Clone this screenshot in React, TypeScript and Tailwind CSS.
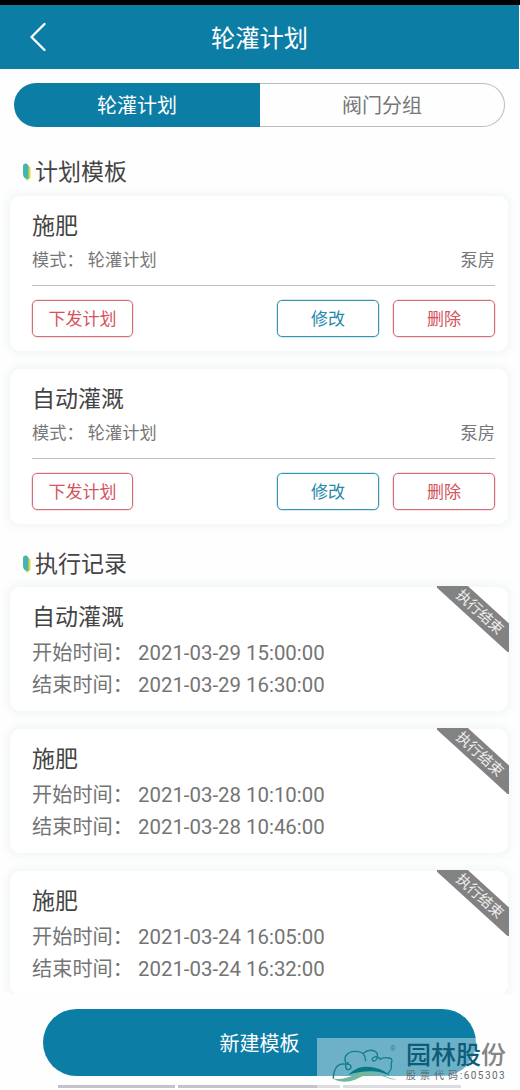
import { ChevronLeft } from "lucide-react"

interface Template {
  name: string
  mode: string
  place: string
}

interface RunRecord {
  name: string
  start: string
  end: string
}

const templates: Template[] = [
  { name: "施肥", mode: "轮灌计划", place: "泵房" },
  { name: "自动灌溉", mode: "轮灌计划", place: "泵房" },
]

const records: RunRecord[] = [
  { name: "自动灌溉", start: "2021-03-29 15:00:00", end: "2021-03-29 16:30:00" },
  { name: "施肥", start: "2021-03-28 10:10:00", end: "2021-03-28 10:46:00" },
  { name: "施肥", start: "2021-03-24 16:05:00", end: "2021-03-24 16:32:00" },
]

function SectionTitle({ children }: { children: string }) {
  return (
    <h2 className="flex h-[34px] items-center pt-[5px] pl-[23px] text-[23px] text-[#444]">
      <svg className="mr-[4px] mb-[4px] h-[18px] w-[8px] shrink-0" viewBox="0 0 8 18">
        <path d="M3 2 7.5 4v10.5L4 18 2.5 15z" fill="#e0d63c" />
        <path d="M0 3Q0 0 3 .5 5.5 1 5.5 4v12Q0 16 0 11z" fill="#46b5b1" />
      </svg>
      {children}
    </h2>
  )
}

function TemplateCard({ template }: { template: Template }) {
  return (
    <div className="h-[155px] rounded-[10px] bg-white pt-[13px] pr-[13px] pl-[22px] shadow-[0_0_10px_3px_rgba(20,120,110,0.06)]">
      <h3 className="h-[34px] text-[23px] leading-[35px] text-[#444]">{template.name}</h3>
      <div className="flex h-[43px] justify-between border-b border-[#bfbfbf] text-[17.2px] leading-[35px] text-[#777]">
        <span>模式： {template.mode}</span>
        <span>{template.place}</span>
      </div>
      <div className="mt-[14px] flex gap-[14px] text-[17px]">
        <button className="mr-auto h-[37px] w-[101px] rounded-[5px] border-[1.5px] border-[#d66c78] pt-[3px] text-[#d4535c] ring-[0.5px] ring-[#d66c78]/40">
          下发计划
        </button>
        <button className="h-[37px] w-[102px] rounded-[5px] border-[1.5px] border-[#3594b0] pt-[3px] text-[#2589ac] ring-[0.5px] ring-[#3594b0]/40">
          修改
        </button>
        <button className="h-[37px] w-[102px] rounded-[5px] border-[1.5px] border-[#d66c78] pt-[3px] text-[#d4535c] ring-[0.5px] ring-[#d66c78]/40">
          删除
        </button>
      </div>
    </div>
  )
}

function RecordCard({ record }: { record: RunRecord }) {
  return (
    <div className="relative h-[124px] shrink-0 rounded-[10px] bg-white px-[22px] pt-[13px] text-[20.4px] leading-8 text-[#747474] shadow-[0_0_10px_3px_rgba(20,120,110,0.06)]">
      <h3 className="h-[37px] text-[23px] leading-[35px] text-[#444]">{record.name}</h3>
      <p>
        <span className="text-[20.2px]">开始时间：</span> {record.start}
      </p>
      <p>
        <span className="text-[20.2px]">结束时间：</span> {record.end}
      </p>
      {/* status ribbon over the corner */}
      <div className="absolute -top-px -right-px h-[66px] w-[72px] overflow-hidden">
        <div className="absolute top-[15px] -left-[20px] flex h-[22px] w-[126px] rotate-[42.4deg] items-center justify-center bg-[#828282] pt-[3px] text-[14.5px] leading-none text-[#eee]">
          执行结束
        </div>
      </div>
    </div>
  )
}

function Watermark() {
  return (
    <div className="absolute top-[44px] left-[317px] h-[52px] w-[203px] bg-white/40">
      <svg className="absolute top-[9px] left-[14px]" width="67" height="36" viewBox="0 0 67 36" fill="none">
        <g stroke="#16808a" strokeWidth="1.4" strokeLinecap="round">
          <path d="M2.300 31.300C2.500 27 3 24 4.700 21.300 6.500 18 9 17 12.300 17c4 0 8 0 7.700 3-.5 3.500-4.500 3.500-5.300 0-.3-2 .6-3.800 2.600-4.300" />
          <path d="M14.700 15.500C13.800 13 13.500 11 14.700 9c2-3 5-4.600 9.300-4.600 5 0 8.500 2 9.600 4.600.6 1.800.8 3 1.100 4.700" />
          <path d="M32.500 6.300C35 4 37.500 3.200 40 3.300c4 .3 6.300 2.500 6.500 5 .1 3-1.200 5.700-3.500 5.700-2.600-.4-2.400-3.600 1-4.100 2.500-.3 4.500.6 5 2.400 2-1.400 4-1.800 6.700-1.600 2.800 0 5 .4 5.200 2.500.2 2-1.400 3-.6 4.800.6 3-1 6-3 8" />
        </g>
        <path
          d="M2 31.500c8 1.500 14-.5 22-3.800 6-2.500 10-3.600 15-3 10 .8 17 6.500 27 7.800-6 .6-10-2.300-15.300-3.500-5-1.200-9-2.200-13.700-1.500-5 1-8.500 3.200-13 5.300-7 2.800-16 2.700-22-1.300z"
          fill="#73b69b"
        />
        <path d="M17 28c4-3.500 7-6 11-7.200 5-1.500 11-1 16 0 6 1.200 11 4.200 15 7.700-5-1.700-9-3.500-15-3.900-9-.8-17 .4-27 3.400z" fill="#08797d" />
      </svg>
      <span className="absolute top-[8px] left-[73px] text-[7px] leading-none text-[#3d829b]">®</span>
      <div className="absolute top-[5px] left-[89px] flex text-[25px] leading-[25px] font-medium whitespace-nowrap text-[#0d5c78]">
        园林股<span className="text-[#858585]">份</span>
      </div>
      <div className="absolute top-[32px] left-[89px] text-[10px] leading-[12px] whitespace-nowrap text-[#606b70]">
        <span className="tracking-[4px]">股票代码</span>
        <span className="-ml-[2px] tracking-[1.4px]">:605303</span>
      </div>
    </div>
  )
}

export default function App() {
  return (
    <div className="flex h-[1090px] w-[520px] flex-col overflow-hidden bg-[#fefefe] font-['Roboto','Noto_Sans_CJK_SC',sans-serif]">
      <div className="h-[5px] shrink-0 bg-black" />
      <header className="grid h-[64px] w-[519px] shrink-0 grid-cols-3 items-center bg-[#0c7da5] text-white">
        <ChevronLeft className="ml-[12px] size-[52px]" strokeWidth={1.1} />
        <h1 className="pt-[4px] text-center text-[24.3px]">轮灌计划</h1>
      </header>

      <nav className="mx-[14px] mt-[14px] flex h-[44px] w-[491px] shrink-0 text-[20px]">
        <button className="w-[246px] rounded-l-full bg-[#0c7da5] pt-[2px] text-white">轮灌计划</button>
        <button className="flex-1 rounded-r-full border border-l-0 border-[#bcbcbc] pt-[2px] text-[#777]">阀门分组</button>
      </nav>

      <main className="flex min-h-0 w-[518px] flex-1 flex-col overflow-hidden pt-[27px]">
        <SectionTitle>计划模板</SectionTitle>
        <div className="mx-[10px] mt-[8px] flex flex-col gap-[18px]">
          {templates.map((template) => (
            <TemplateCard key={template.name} template={template} />
          ))}
        </div>

        <div className="mt-[22px]">
          <SectionTitle>执行记录</SectionTitle>
        </div>
        <div className="mx-[10px] mt-[7px] flex flex-col gap-[18px]">
          {records.map((record) => (
            <RecordCard key={record.start} record={record} />
          ))}
        </div>
      </main>

      <footer className="relative h-[96px] shrink-0 bg-[#fefefe] pt-[15px]">
        <button className="ml-[43px] block h-[67px] w-[433px] rounded-full bg-[#0c7da5] pt-[2px] text-[20px] text-white">
          新建模板
        </button>
        <div className="mt-[9px] ml-[58px] flex gap-[3px]">
          <div className="h-[3px] w-[117px] bg-[#c3c3cb]" />
          <div className="h-[3px] w-[162px] bg-[#c3c3cb]" />
          <div className="h-[3px] w-[118px] bg-[#c3c3cb]" />
        </div>
        <Watermark />
      </footer>
    </div>
  )
}
